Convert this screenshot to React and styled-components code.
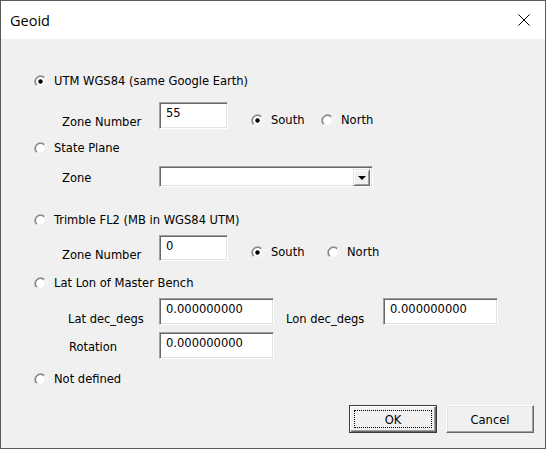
import React from 'react'
import styled, { createGlobalStyle, css } from 'styled-components'

const GlobalStyle = createGlobalStyle`
  html, body {
    margin: 0;
    padding: 0;
    background: #fff;
  }
  body {
    font-family: "DejaVu Sans Condensed", "DejaVu Sans", sans-serif;
    font-size: 12.8px;
    color: #000;
  }
`

const Window = styled.div`
  width: 546px;
  height: 449px;
  box-sizing: border-box;
  border: 1px solid #5a5a5a;
  background: #f0f0f0;
  display: flex;
  flex-direction: column;
  overflow: hidden;
`

const TitleBar = styled.header`
  height: 38px;
  flex: none;
  background: #fff;
  display: flex;
  align-items: center;
  justify-content: space-between;
  padding: 0 15px 0 9px;
`

const Title = styled.span`
  font-family: "Open Sans", "Noto Sans", sans-serif;
  font-size: 14.5px;
  color: #000;
`

const Body = styled.div`
  flex: 1;
  display: flex;
  flex-direction: column;
  padding: 0 11px 0 33px;
`

const Row = styled.div`
  display: flex;
  align-items: flex-start;
  height: ${({ $h }) => $h}px;
  margin-top: ${({ $top }) => $top}px;
  padding-left: ${({ $indent = 0 }) => $indent}px;
`

const Option = styled.label`
  display: flex;
  align-items: center;
  height: 14px;
  line-height: 14px;
  white-space: nowrap;
  width: ${({ $w }) => ($w ? `${$w}px` : 'auto')};
  margin-top: ${({ $offset = 0 }) => $offset}px;
  margin-left: ${({ $left = 0 }) => $left}px;
`

const OptionText = styled.span`
  margin-left: 7px;
`

const Label = styled.span`
  flex: none;
  width: ${({ $w }) => $w}px;
  line-height: 14px;
  margin-top: ${({ $offset = 0 }) => $offset}px;
  padding-left: ${({ $pad = 0 }) => $pad}px;
  box-sizing: border-box;
  white-space: nowrap;
`

const sunken = css`
  box-sizing: border-box;
  background: #fff;
  border: 1px solid;
  border-color: #a0a0a0 #fff #fff #a0a0a0;
  box-shadow: inset 1px 1px #696969, inset -1px -1px #e3e3e3;
`

const TextBox = styled.div`
  ${sunken};
  width: ${({ $w }) => $w}px;
  height: ${({ $h = 27 }) => $h}px;
  padding: 3px 0 0 6px;
  line-height: 14px;
  flex: none;
`

const Select = styled.div`
  ${sunken};
  width: 214px;
  height: 21px;
  display: flex;
  justify-content: flex-end;
  padding: 2px;
`

const DropButton = styled.span`
  width: 17px;
  height: 17px;
  box-sizing: border-box;
  background: #f0f0f0;
  border: 1px solid;
  border-color: #e3e3e3 #696969 #696969 #e3e3e3;
  box-shadow: inset 1px 1px #fff, inset -1px -1px #a0a0a0;
  display: flex;
  align-items: center;
  justify-content: center;
`

const Arrow = styled.span`
  width: 0;
  height: 0;
  border-left: 4px solid transparent;
  border-right: 4px solid transparent;
  border-top: 4px solid #000;
  margin-top: 1px;
`

const ButtonRow = styled.div`
  display: flex;
  justify-content: flex-end;
  gap: 9px;
  margin-top: 19px;
`

const Button = styled.button`
  position: relative;
  width: 88px;
  height: 28px;
  box-sizing: border-box;
  padding: 0;
  font: inherit;
  color: #000;
  background: #f0f0f0;
  border: 1px solid;
  border-color: #fff #696969 #696969 #fff;
  box-shadow: inset -1px -1px #a0a0a0, inset 1px 1px #e3e3e3;

  ${({ $default }) =>
    $default &&
    css`
      border-color: #3c3c3c;
      box-shadow: inset 1px 1px #fff, inset -1px -1px #696969,
        inset -2px -2px #a0a0a0;

      &::after {
        content: '';
        position: absolute;
        inset: 4px;
        border: 1px dotted #000;
      }
    `}
`

const Radio = ({ checked }) => (
  <svg width='13' height='13' viewBox='0 0 13 13'>
    <circle cx='6.5' cy='6.5' r='5' fill='#fff' />
    <path d='M2.26 10.74 A6 6 0 0 1 10.74 2.26' fill='none' stroke='#a0a0a0' />
    <path d='M10.74 2.26 A6 6 0 0 1 2.26 10.74' fill='none' stroke='#fff' />
    <path d='M2.96 10.04 A5 5 0 0 1 10.04 2.96' fill='none' stroke='#696969' />
    <path d='M10.04 2.96 A5 5 0 0 1 2.96 10.04' fill='none' stroke='#e3e3e3' />
    {checked && <circle cx='6.5' cy='6.5' r='2.2' fill='#000' />}
  </svg>
)

const RadioOption = ({ checked, children, ...rest }) => (
  <Option {...rest}>
    <Radio checked={checked} />
    <OptionText>{children}</OptionText>
  </Option>
)

const CloseIcon = () => (
  <svg width='12' height='12' viewBox='0 0 12 12'>
    <path d='M0.5 0.5 L11.5 11.5 M11.5 0.5 L0.5 11.5' stroke='#000' strokeWidth='1' />
  </svg>
)

export default function App() {
  return (
    <>
      <GlobalStyle />
      <Window>
        <TitleBar>
          <Title>Geoid</Title>
          <CloseIcon />
        </TitleBar>
        <Body>
          <Row $h={14} $top={35}>
            <RadioOption checked>UTM WGS84 (same Google Earth)</RadioOption>
          </Row>
          <Row $h={27} $top={14} $indent={28}>
            <Label $w={97} $offset={13}>Zone Number</Label>
            <TextBox $w={69}>55</TextBox>
            <RadioOption checked $w={70} $offset={11} $left={23}>South</RadioOption>
            <RadioOption $offset={11}>North</RadioOption>
          </Row>
          <Row $h={14} $top={12}>
            <RadioOption>State Plane</RadioOption>
          </Row>
          <Row $h={21} $top={11} $indent={28}>
            <Label $w={97} $offset={5}>Zone</Label>
            <Select>
              <DropButton>
                <Arrow />
              </DropButton>
            </Select>
          </Row>
          <Row $h={14} $top={26}>
            <RadioOption>Trimble FL2 (MB in WGS84 UTM)</RadioOption>
          </Row>
          <Row $h={26} $top={8} $indent={28}>
            <Label $w={97} $offset={13}>Zone Number</Label>
            <TextBox $w={69} $h={26}>0</TextBox>
            <RadioOption checked $w={76} $offset={10} $left={23}>South</RadioOption>
            <RadioOption $offset={10}>North</RadioOption>
          </Row>
          <Row $h={14} $top={15}>
            <RadioOption>Lat Lon of Master Bench</RadioOption>
          </Row>
          <Row $h={27} $top={8} $indent={34}>
            <Label $w={91} $offset={14}>Lat dec_degs</Label>
            <TextBox $w={115}>0.000000000</TextBox>
            <Label $w={109} $offset={14} $pad={12}>Lon dec_degs</Label>
            <TextBox $w={115}>0.000000000</TextBox>
          </Row>
          <Row $h={27} $top={7} $indent={34}>
            <Label $w={91} $offset={8} $pad={1}>Rotation</Label>
            <TextBox $w={115}>0.000000000</TextBox>
          </Row>
          <Row $h={14} $top={13}>
            <RadioOption>Not defined</RadioOption>
          </Row>
          <ButtonRow>
            <Button $default>OK</Button>
            <Button>Cancel</Button>
          </ButtonRow>
        </Body>
      </Window>
    </>
  )
}
